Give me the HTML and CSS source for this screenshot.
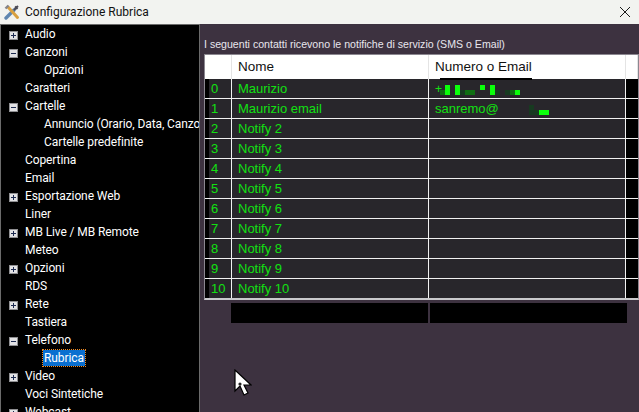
FILE: index.html
```html
<!DOCTYPE html>
<html lang="it">
<head>
<meta charset="utf-8">
<title>Configurazione Rubrica</title>
<link rel="stylesheet" href="styles.css">
</head>
<body>
<header class="titlebar">
  <svg class="appicon" width="16" height="16" viewBox="0 0 16 16">
    <path d="M2 14 L10 6" stroke="#5f86b0" stroke-width="3.4" stroke-linecap="round"/>
    <path d="M10 6 L14 2 M11 2.5 L13.5 5" stroke="#4a4a55" stroke-width="2" fill="none"/>
    <path d="M4 3 L13.5 13.5" stroke="#d8a040" stroke-width="3" stroke-linecap="round"/>
    <path d="M1.5 4.5 L4.5 1.5" stroke="#85858c" stroke-width="2.4"/>
  </svg>
  <span class="title">Configurazione Rubrica</span>
  <svg class="close" width="10" height="10" viewBox="0 0 10 10"><path d="M0 0 L10 10 M10 0 L0 10" stroke="#1a1a1a" stroke-width="1"/></svg>
</header>
<div class="main">
  <nav class="tree">
    <div class="node"><span class="box plus"></span><span class="label">Audio</span></div>
    <div class="node"><span class="box minus"></span><span class="label">Canzoni</span></div>
    <div class="node child"><span class="label">Opzioni</span></div>
    <div class="node"><span class="box none"></span><span class="label">Caratteri</span></div>
    <div class="node"><span class="box minus"></span><span class="label">Cartelle</span></div>
    <div class="node child"><span class="label">Annuncio (Orario, Data, Canzone)</span></div>
    <div class="node child"><span class="label">Cartelle predefinite</span></div>
    <div class="node"><span class="box none"></span><span class="label">Copertina</span></div>
    <div class="node"><span class="box none"></span><span class="label">Email</span></div>
    <div class="node"><span class="box plus"></span><span class="label">Esportazione Web</span></div>
    <div class="node"><span class="box none"></span><span class="label">Liner</span></div>
    <div class="node"><span class="box plus"></span><span class="label">MB Live / MB Remote</span></div>
    <div class="node"><span class="box none"></span><span class="label">Meteo</span></div>
    <div class="node"><span class="box plus"></span><span class="label">Opzioni</span></div>
    <div class="node"><span class="box none"></span><span class="label">RDS</span></div>
    <div class="node"><span class="box plus"></span><span class="label">Rete</span></div>
    <div class="node"><span class="box none"></span><span class="label">Tastiera</span></div>
    <div class="node"><span class="box minus"></span><span class="label">Telefono</span></div>
    <div class="node child"><span class="label selected">Rubrica</span></div>
    <div class="node"><span class="box plus"></span><span class="label">Video</span></div>
    <div class="node"><span class="box none"></span><span class="label">Voci Sintetiche</span></div>
    <div class="node"><span class="box plus"></span><span class="label">Webcast</span></div>
  </nav>
  <section class="panel">
    <p class="caption">I seguenti contatti ricevono le notifiche di servizio (SMS o Email)</p>
    <div class="grid">
      <div class="row head"><div class="c0"></div><div class="c1">Nome</div><div class="c2"><span class="headtext">Numero o Email</span></div><div class="c3"></div></div>
      <div class="row"><div class="c0">0</div><div class="c1">Maurizio</div><div class="c2"><span class="plusmark">+</span><span class="blur"><i class="mid low"></i><i class="hi"></i><i></i><i class="hi"></i><i class="dim low"></i><i class="mid low"></i><i class="mid low"></i><i></i><i class="hi top"></i><i></i><i class="hi"></i><i class="dim low"></i><i></i><i class="dim low"></i><i class="mid low"></i><i class="hi low"></i></span></div><div class="c3"></div></div>
      <div class="row"><div class="c0">1</div><div class="c1">Maurizio email</div><div class="c2">sanremo@<span class="blur after"><i class="dim"></i><i class="dim low"></i><i class="hi low"></i><i class="hi low"></i></span></div><div class="c3"></div></div>
      <div class="row"><div class="c0">2</div><div class="c1">Notify 2</div><div class="c2"></div><div class="c3"></div></div>
      <div class="row"><div class="c0">3</div><div class="c1">Notify 3</div><div class="c2"></div><div class="c3"></div></div>
      <div class="row"><div class="c0">4</div><div class="c1">Notify 4</div><div class="c2"></div><div class="c3"></div></div>
      <div class="row"><div class="c0">5</div><div class="c1">Notify 5</div><div class="c2"></div><div class="c3"></div></div>
      <div class="row"><div class="c0">6</div><div class="c1">Notify 6</div><div class="c2"></div><div class="c3"></div></div>
      <div class="row"><div class="c0">7</div><div class="c1">Notify 7</div><div class="c2"></div><div class="c3"></div></div>
      <div class="row"><div class="c0">8</div><div class="c1">Notify 8</div><div class="c2"></div><div class="c3"></div></div>
      <div class="row"><div class="c0">9</div><div class="c1">Notify 9</div><div class="c2"></div><div class="c3"></div></div>
      <div class="row"><div class="c0">10</div><div class="c1">Notify 10</div><div class="c2"></div><div class="c3"></div></div>
    </div>
    <div class="footer"><div class="fbox"></div><div class="fbox"></div></div>
    <svg class="cursor" width="18" height="28" viewBox="0 0 18 28">
      <path d="M1 1 L1 22 L6 17 L10 26 L14 24 L10 16 L17 16 Z" fill="#fff" stroke="#000" stroke-width="1.2"/>
      <circle cx="6" cy="15" r="1.6" fill="#222"/>
    </svg>
  </section>
</div>
</body>
</html>
```
FILE: styles.css
```css
* { box-sizing: border-box; }
html, body { margin: 0; height: 100%; overflow: hidden; }
body {
  width: 639px; height: 412px;
  display: flex; flex-direction: column;
  background: #3d3240;
  font-family: "Liberation Sans", sans-serif;
}
.titlebar {
  flex: none; height: 24px;
  display: flex; align-items: center;
  background: #f2f3f0;
  padding-left: 4px;
}
.appicon { flex: none; }
.title {
  margin-left: 5px;
  font: 12px Roboto, sans-serif;
  color: #111;
}
.close { margin-left: auto; margin-right: 9px; }
.main { flex: 1; display: flex; min-height: 0; }
.tree {
  flex: none; width: 200px; height: 388px;
  overflow: hidden;
  background: #000;
  border-top: 1px solid #6b6b6b;
  border-left: 1px solid #6b6b6b;
  border-right: 1px solid #6b6b6b;
  color: #fff;
  font: 12px Roboto, sans-serif;
  letter-spacing: -0.1px;
}
.node {
  height: 18px;
  display: flex; align-items: center;
  padding-left: 8px;
  white-space: nowrap;
}
.node.child { padding-left: 42px; }
.box {
  flex: none; width: 9px; height: 9px;
  margin: 3px 6px 0 0;
  background: #e2e2e4;
  border: 1px solid #8f8f92;
  position: relative;
}
.box.none { visibility: hidden; }
.box::before, .box.plus::after {
  content: ""; position: absolute; background: #1c2a50;
}
.box::before { left: 1px; top: 3px; width: 5px; height: 1px; }
.box.plus::after { left: 3px; top: 1px; width: 1px; height: 5px; }
.label { line-height: 16px; padding: 0 1px; }
.selected {
  background: #0a6fd0;
  outline: 1px dotted #f08a20;
}
.panel { flex: 1; position: relative; padding: 13px 1px 0 4px; min-width: 0; }
.caption {
  margin: 0;
  height: 17px;
  font-size: 10.6px;
  line-height: 14px;
  color: #e8e6ee;
  white-space: nowrap;
}
.grid {
  border: 1px solid #8b8790;
  border-bottom: 2px solid #c9c9cc;
  width: 435px;
  background: #000;
  font-size: 13px;
  color: #12e012;
}
.row {
  display: grid;
  grid-template-columns: 27px 197px 197px 1fr;
  height: 20px;
  border-bottom: 1px solid #f2f2f2;
  background: #000;
}
.row:last-child { border-bottom: none; height: 19px; }
.row > div {
  background: #28262b;
  height: 19px;
  line-height: 18px;
  padding: 1px 0 0 6px;
  border-right: 1px solid #f2f2f2;
  white-space: nowrap;
  display: flex; align-items: center;
}
.row > .c0 {
  border-left: 4px solid #000;
  padding-left: 2px;
}
.row > .c3 { background: #000; border: none; }
.row.head { height: 24px; border-bottom: none; background: #fff; color: #111; font-size: 13.5px; }
.row.head > div { height: 24px; background: #fff; border-right: 1px solid #e4e4e4; border-left: none; padding-top: 0; }
.row.head > .c3 { background: #fff; }
.headtext { position: relative; line-height: 20px; }
.headtext::after {
  content: ""; position: absolute;
  left: 5px; right: 0; top: 21px;
  height: 2px; background: #000;
}
.plusmark { font-size: 12px; width: 5px; overflow: visible; }
.blur { display: inline-flex; height: 10px; margin-top: 2px; }
.blur.after { margin-left: 30px; }
.blur i { display: block; width: 5px; height: 10px; flex: none; align-self: flex-end; }
.hi { background: #0bff0b; }
.mid { background: #0f6e12; }
.dim { background: #173a20; }
.blur i.top { height: 5px; align-self: flex-start; }
.blur i.low { height: 5px; }
.footer {
  margin: 3px 0 0 27px;
  display: flex; gap: 2px;
}
.fbox { width: 197px; height: 20px; background: #000; }
.cursor { position: absolute; left: 34px; top: 345px; }
```
